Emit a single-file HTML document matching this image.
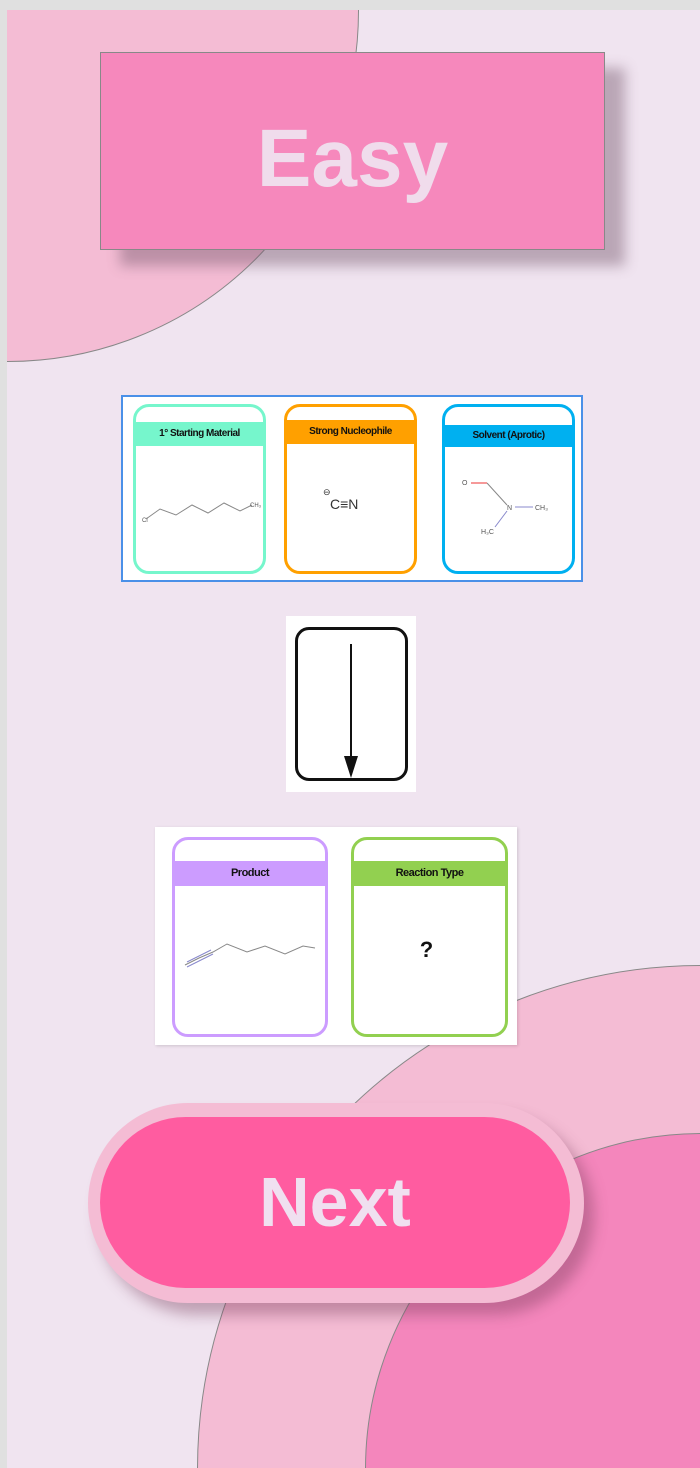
<!DOCTYPE html>
<html><head><style>
html,body{margin:0;width:700px;height:1468px;overflow:hidden}
body{background:#e0e0e0;font-family:"Liberation Sans",sans-serif;position:relative}
#pg{position:absolute;left:7px;top:10px;width:693px;height:1458px;background:#f0e4f0;overflow:hidden}
.abs{position:absolute}
.card{position:absolute;background:#fff;border:3px solid;border-radius:16px;box-sizing:border-box;overflow:hidden}
.hd{position:absolute;left:0;right:0;font-size:10px;font-weight:bold;text-align:center;color:#111;letter-spacing:-0.5px}
</style></head><body>
<div id="pg">
<div class="abs" style="left:-350px;top:-350px;width:700px;height:700px;border-radius:50%;background:#f4bcd4;border:1px solid #888"></div>
<div class="abs" style="left:190px;top:955px;width:1006px;height:1006px;border-radius:50%;background:#f4bcd4;border:1px solid #888"></div>
<div class="abs" style="left:358px;top:1123px;width:670px;height:670px;border-radius:50%;background:#f486bc;border:1px solid #888"></div>

<div class="abs" style="left:93px;top:42px;width:503px;height:196px;background:#f688bc;border:1px solid #888;box-shadow:20px 16px 12px rgba(120,90,110,0.45);text-align:center;line-height:212px;font-size:82px;font-weight:bold;color:#f0dcec">Easy</div>

<div class="abs" style="left:114px;top:385px;width:458px;height:183px;background:#fff;border:2px solid #4a90e8"></div>
<div class="card" style="left:126px;top:394px;width:133px;height:170px;border-color:#76f6cc">
 <div class="hd" style="top:15px;height:24px;line-height:24px;background:#76f6cc">1° Starting Material</div>
 <svg class="abs" style="left:0;top:40px" width="130" height="90"><polyline points="10,72 24,62 40,68 56,58 72,66 88,56 104,64 116,58" fill="none" stroke="#888" stroke-width="1"/><text x="6" y="75" font-size="6" fill="#555">Cl</text><text x="114" y="60" font-size="6" fill="#555">CH₃</text></svg>
</div>
<div class="card" style="left:277px;top:394px;width:133px;height:170px;border-color:#ffa000">
 <div class="hd" style="top:13px;height:24px;line-height:24px;background:#ffa000">Strong Nucleophile</div>
 <svg class="abs" style="left:0;top:40px" width="130" height="90"><text x="36" y="48" font-size="9" fill="#333">⊖</text><text x="43" y="62" font-size="14" fill="#333">C≡N</text></svg>
</div>
<div class="card" style="left:435px;top:394px;width:133px;height:170px;border-color:#00b0f0">
 <div class="hd" style="top:18px;height:22px;line-height:22px;background:#00b0f0">Solvent (Aprotic)</div>
 <svg class="abs" style="left:0;top:40px" width="130" height="100"><line x1="26" y1="36" x2="42" y2="36" stroke="#e33"/><line x1="42" y1="36" x2="62" y2="58" stroke="#888"/><line x1="62" y1="64" x2="50" y2="80" stroke="#88c"/><line x1="70" y1="60" x2="88" y2="60" stroke="#88c"/><text x="17" y="38" font-size="7" fill="#555">O</text><text x="62" y="63" font-size="7" fill="#555">N</text><text x="90" y="63" font-size="7" fill="#555">CH₃</text><text x="36" y="87" font-size="7" fill="#555">H₃C</text></svg>
</div>

<div class="abs" style="left:279px;top:606px;width:130px;height:176px;background:#fff"></div>
<div class="abs" style="left:288px;top:617px;width:113px;height:154px;border:3px solid #111;border-radius:14px;box-sizing:border-box"></div>
<svg class="abs" style="left:279px;top:606px" width="130" height="176"><line x1="65" y1="28" x2="65" y2="145" stroke="#111" stroke-width="2"/><polygon points="58,140 72,140 65,162" fill="#111"/></svg>

<div class="abs" style="left:148px;top:817px;width:362px;height:218px;background:#fff;box-shadow:1px 1px 3px rgba(0,0,0,0.15)"></div>
<div class="card" style="left:165px;top:827px;width:156px;height:200px;border-color:#cc9cff">
 <div class="hd" style="top:21px;height:25px;line-height:25px;background:#cc9cff;font-size:11px">Product</div>
 <svg class="abs" style="left:0;top:50px" width="150" height="120"><polyline points="10,75 24,68 38,62 52,54 72,62 90,56 110,64 128,56 140,58" fill="none" stroke="#888" stroke-width="1"/><line x1="12" y1="72" x2="36" y2="60" stroke="#88c"/><line x1="12" y1="77" x2="38" y2="64" stroke="#88c"/></svg>
</div>
<div class="card" style="left:344px;top:827px;width:157px;height:200px;border-color:#92d050">
 <div class="hd" style="top:21px;height:25px;line-height:25px;background:#92d050;font-size:11px">Reaction Type</div>
 <div class="abs" style="left:-6px;right:0;top:97px;text-align:center;font-size:22px;font-weight:bold;color:#111">?</div>
</div>

<div class="abs" style="left:81px;top:1093px;width:496px;height:200px;border-radius:100px;background:#f4bcd4;box-shadow:10px 12px 14px rgba(120,60,90,0.4)"></div>
<div class="abs" style="left:93px;top:1107px;width:470px;height:171px;border-radius:86px;background:#ff5ca0;text-align:center;line-height:171px;font-size:70px;font-weight:bold;color:#f0e0f0">Next</div>
</div>
</body></html>
